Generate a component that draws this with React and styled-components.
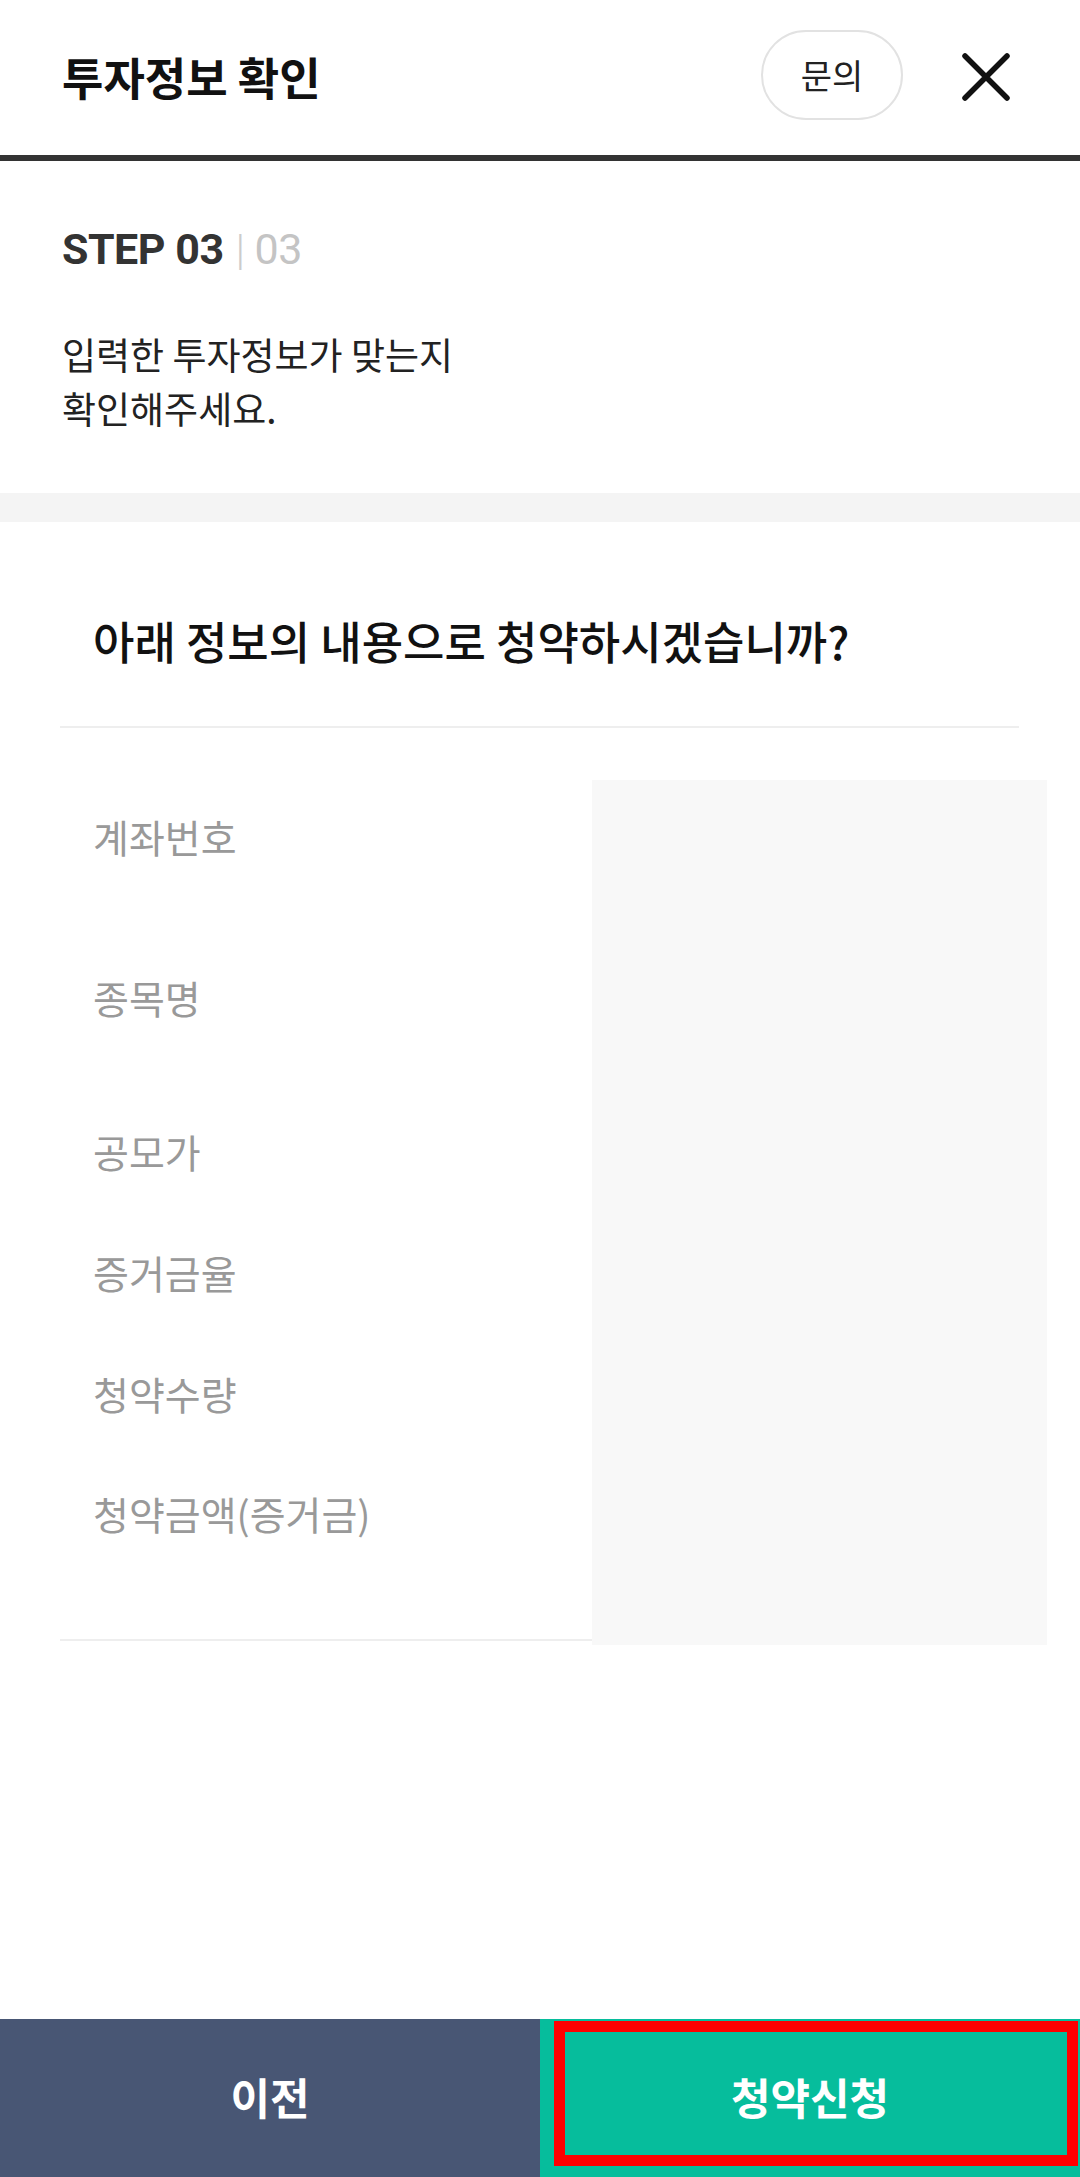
import React from 'react'
import styled, { createGlobalStyle } from 'styled-components'

const GlobalStyle = createGlobalStyle`
  * { box-sizing: border-box; }
  body {
    margin: 0;
    background: #fff;
    font-family: "Noto Sans CJK KR", "Noto Sans", sans-serif;
    color: #111;
  }
`

const rows = [
  { label: '계좌번호', height: 161 },
  { label: '종목명', height: 154 },
  { label: '공모가', height: 121 },
  { label: '증거금율', height: 121 },
  { label: '청약수량', height: 120 },
  { label: '청약금액(증거금)', height: 182 },
]

function CloseIcon() {
  return (
    <svg width="48" height="48" viewBox="0 0 48 48" fill="none">
      <path d="M3 3 L45 45 M45 3 L3 45" stroke="#111" strokeWidth="5.5" strokeLinecap="round" />
    </svg>
  )
}

function App() {
  return (
    <Page>
      <GlobalStyle />
      <Header>
        <Title>투자정보 확인</Title>
        <HeaderRight>
          <AskButton>문의</AskButton>
          <CloseButton aria-label="닫기">
            <CloseIcon />
          </CloseButton>
        </HeaderRight>
      </Header>

      <StepSection>
        <StepLabel>
          STEP 03<StepBar>|</StepBar><StepTotal>03</StepTotal>
        </StepLabel>
        <StepDesc>
          입력한 투자정보가 맞는지
          <br />
          확인해주세요.
        </StepDesc>
      </StepSection>

      <Band />

      <Content>
        <Question>아래 정보의 내용으로 청약하시겠습니까?</Question>
        <InfoTable>
          <LabelColumn>
            {rows.map(row => (
              <LabelRow key={row.label} $height={row.height}>
                {row.label}
              </LabelRow>
            ))}
          </LabelColumn>
          <ValueColumn />
        </InfoTable>
      </Content>

      <Footer>
        <FooterButton $bg="#485674">이전</FooterButton>
        <FooterButton $bg="#06bd9c">
          청약신청
          <Highlight />
        </FooterButton>
      </Footer>
    </Page>
  )
}

export default App

const Page = styled.div`
  min-height: 100vh;
  display: flex;
  flex-direction: column;
`

const Header = styled.header`
  height: 161px;
  padding: 0 70px 6px 62px;
  display: flex;
  align-items: center;
  justify-content: space-between;
  border-bottom: 6px solid #333;
`

const Title = styled.h1`
  margin: 0;
  font-size: 45px;
  font-weight: 700;
  line-height: 1;
  color: #111;
  padding-top: 4px;
`

const HeaderRight = styled.div`
  display: flex;
  align-items: center;
  gap: 59px;
`

const AskButton = styled.button`
  width: 142px;
  height: 90px;
  border: 2px solid #e2e2e2;
  border-radius: 45px;
  background: #fff;
  font-family: "Noto Sans CJK KR", sans-serif;
  font-size: 34px;
  color: #222;
  padding: 0;
`

const CloseButton = styled.button`
  border: 0;
  background: none;
  padding: 0;
  display: flex;
  margin-top: 4px;
`

const StepSection = styled.section`
  padding: 62px 62px 58px;
`

const StepLabel = styled.div`
  font-family: Roboto, "Noto Sans CJK KR", sans-serif;
  font-size: 43px;
  font-weight: 700;
  line-height: 52px;
  color: #333;
  letter-spacing: -0.5px;
`

const StepBar = styled.span`
  font-weight: 300;
  color: #ccc;
  margin: 0 10px 0 12px;
`

const StepTotal = styled.span`
  font-weight: 400;
  color: #c4c4c4;
`

const StepDesc = styled.p`
  margin: 52px 0 0;
  font-size: 37px;
  line-height: 54px;
  color: #222;
`

const Band = styled.div`
  height: 29px;
  background: #f4f4f4;
`

const Content = styled.section`
  padding: 90px 33px 0 60px;
`

const Question = styled.h2`
  margin: 0 28px 0 0;
  padding: 0 0 56px 33px;
  font-size: 45px;
  font-weight: 500;
  line-height: 58px;
  color: #111;
  border-bottom: 2px solid #eee;
`

const InfoTable = styled.div`
  margin-top: 52px;
  display: flex;
  align-items: stretch;
`

const LabelColumn = styled.div`
  width: 532px;
  border-bottom: 2px solid #eee;
  align-self: flex-start;
`

const LabelRow = styled.div`
  height: ${p => p.$height}px;
  padding: 31px 0 0 33px;
  font-size: 39px;
  line-height: 50px;
  color: #999;
`

const ValueColumn = styled.div`
  flex: 1;
  background: #f8f8f8;
  margin-bottom: -4px;
`

const Footer = styled.footer`
  margin-top: auto;
  height: 158px;
  display: flex;
`

const FooterButton = styled.button`
  position: relative;
  flex: 1;
  border: 0;
  background: ${p => p.$bg};
  color: #fff;
  font-family: "Noto Sans CJK KR", sans-serif;
  font-size: 43px;
  font-weight: 700;
  padding: 0 0 4px;
`

const Highlight = styled.span`
  position: absolute;
  top: 2px;
  left: 14px;
  right: 2px;
  bottom: 11px;
  border: 11px solid #ff0000;
  pointer-events: none;
`
